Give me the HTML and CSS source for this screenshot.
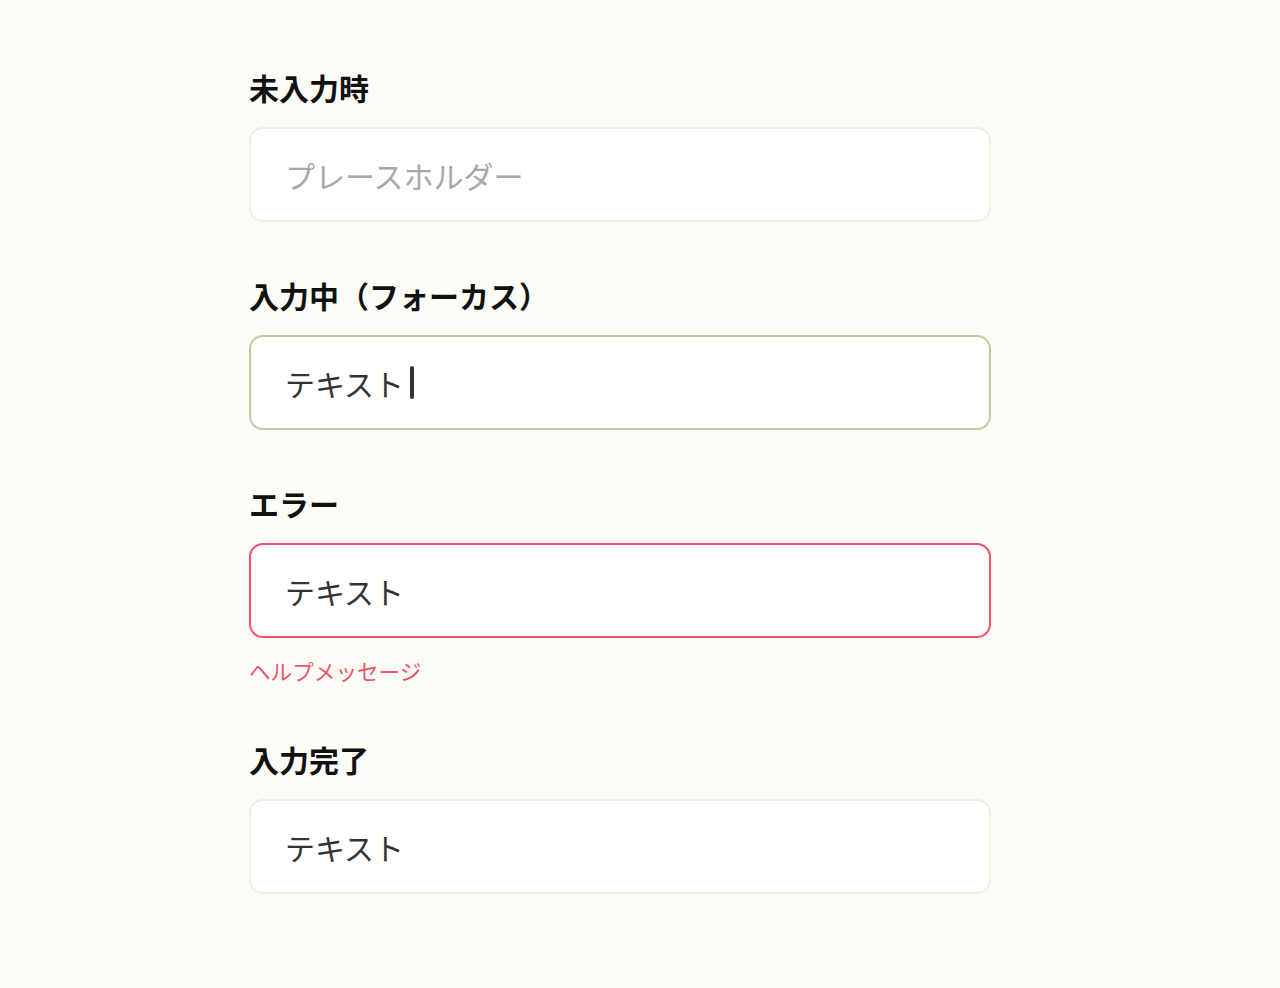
FILE: index.html
```html
<!DOCTYPE html>
<html lang="ja">
<head>
<meta charset="utf-8">
<title>入力フィールド</title>
<link rel="stylesheet" href="styles.css">
</head>
<body>
<main class="form">
  <section class="field">
    <div class="label">未入力時</div>
    <div class="input input-empty"><span class="placeholder">プレースホルダー</span></div>
  </section>
  <section class="field">
    <div class="label">入力中（フォーカス）</div>
    <div class="input input-focus"><span class="value">テキスト</span><span class="caret"></span></div>
  </section>
  <section class="field">
    <div class="label">エラー</div>
    <div class="input input-error"><span class="value">テキスト</span></div>
    <div class="help">ヘルプメッセージ</div>
  </section>
  <section class="field">
    <div class="label">入力完了</div>
    <div class="input input-done"><span class="value">テキスト</span></div>
  </section>
</main>
</body>
</html>
```
FILE: styles.css
```css
html, body {
  margin: 0;
  padding: 0;
  background: #fcfcf7;
}
body {
  font-family: "Noto Sans CJK JP", "Noto Sans", sans-serif;
  color: #000;
}
.form {
  width: 742px;
  margin-left: 249px;
  padding-top: 68px;
  display: flex;
  flex-direction: column;
  gap: 54px;
}
.field {
  display: flex;
  flex-direction: column;
}
.label {
  font-size: 30px;
  font-weight: 700;
  line-height: 38px;
  margin-bottom: 21px;
  color: #111;
}
.input {
  box-sizing: border-box;
  height: 95px;
  border: 2px solid #f0efe6;
  border-radius: 14px;
  background: #fff;
  padding: 0 34px;
  display: flex;
  align-items: center;
  font-size: 30px;
  color: #333;
}
.placeholder {
  color: #a8a8a8;
}
.input-focus {
  border-color: #c8c6a3;
}
.input-error {
  border-color: #f2536a;
}
.caret {
  display: inline-block;
  width: 4px;
  height: 33px;
  background: #333;
  margin-left: 6px;
  border-radius: 2px;
}
.help {
  margin-top: 17px;
  font-size: 21.6px;
  line-height: 31px;
  color: #f2536a;
}
```
